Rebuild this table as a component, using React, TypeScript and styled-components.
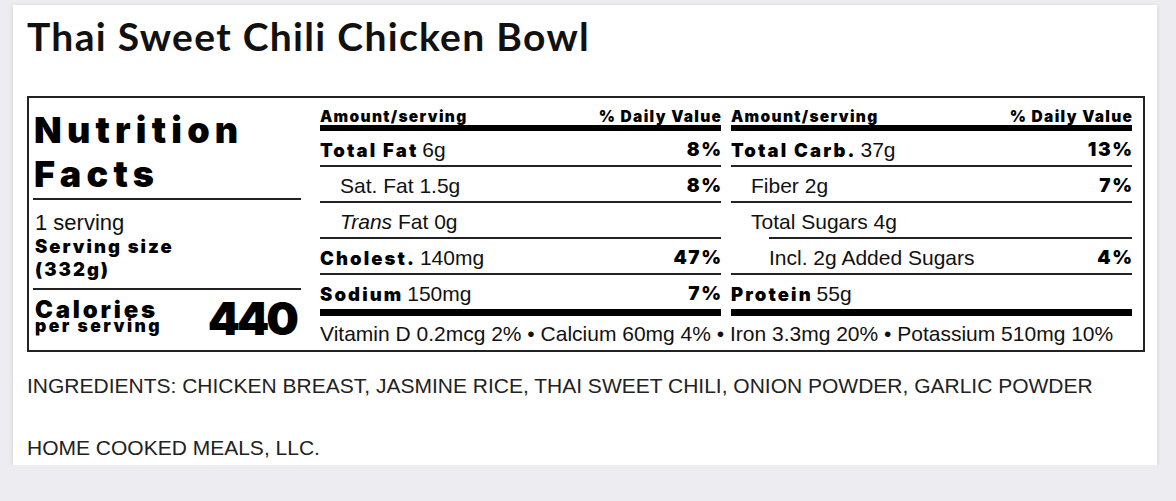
import React from "react";
import styled, { createGlobalStyle } from "styled-components";

const GlobalStyle = createGlobalStyle`
  html, body { margin: 0; padding: 0; background: #ededf1; }
  body { font-family: "Liberation Sans", Arial, sans-serif; color: #111; }
`;

const HEAVY = `"Inter", "Liberation Sans", Arial, sans-serif`;

const Page = styled.div`
  padding: 5px 19px 0 13px;
`;

const Card = styled.div`
  width: 1144px;
  height: 460px;
  box-sizing: border-box;
  background: #fff;
  box-shadow: 0 1px 4px rgba(0, 0, 0, 0.14);
  padding: 8px 0 0 14px;
`;

const Title = styled.h1`
  margin: 0;
  font-family: "Lato", sans-serif;
  font-weight: 700;
  font-size: 39px;
  line-height: 46px;
  letter-spacing: 1.3px;
  color: #111;
`;

const Label = styled.div`
  margin-top: 37px;
  width: 1118px;
  height: 256px;
  box-sizing: border-box;
  border: 2px solid #222;
  display: flex;
  padding: 0 11px 0 4px;
`;

const LeftPanel = styled.div`
  width: 268px;
  display: flex;
  flex-direction: column;
`;

const BigTitle = styled.div`
  font-family: ${HEAVY};
  font-weight: 900;
  font-size: 36px;
  line-height: 44px;
  letter-spacing: 5.2px;
  margin: 10px 0 2px;
  padding-left: 1px;
  color: #000;
`;

const ThinRule = styled.div`
  height: 2px;
  background: #222;
`;

const ServingBlock = styled.div`
  padding: 11px 0 7px 2px;
  display: flex;
  flex-direction: column;
`;

const Servings = styled.div`
  font-size: 22px;
  line-height: 24px;
  color: #111;
`;

const ServingSize = styled.div`
  font-family: ${HEAVY};
  font-weight: 900;
  font-size: 18.5px;
  line-height: 23px;
  letter-spacing: 2px;
  color: #000;
`;

const CaloriesRow = styled.div`
  display: flex;
  justify-content: space-between;
  align-items: flex-start;
  padding: 11px 0 0 2px;
  color: #000;
`;

const CaloriesLabel = styled.div`
  font-family: ${HEAVY};
  font-weight: 900;
  display: flex;
  flex-direction: column;
`;

const CalBig = styled.span`
  font-size: 24px;
  line-height: 18px;
  letter-spacing: 2.8px;
`;

const CalSmall = styled.span`
  font-size: 17.5px;
  line-height: 13px;
  letter-spacing: 2.4px;
`;

const CalValue = styled.div`
  font-family: ${HEAVY};
  font-weight: 900;
  font-size: 46px;
  line-height: 40px;
  letter-spacing: -3px;
  margin: -3px 5px 0 0;
`;

const RightArea = styled.div`
  margin-left: 19px;
  width: 812px;
  display: grid;
  grid-template-columns: 401px 401px;
  column-gap: 10px;
  grid-template-rows: auto 1fr;
`;

const Column = styled.div`
  display: flex;
  flex-direction: column;
`;

const Header = styled.div`
  height: 27px;
  display: flex;
  justify-content: space-between;
  align-items: flex-end;
  font-family: ${HEAVY};
  font-weight: 900;
  font-size: 15.5px;
  line-height: 16px;
  letter-spacing: 1.3px;
  margin-right: -1.3px;
  color: #000;
`;

const Bar = styled.div<{ $h: number }>`
  height: ${(p) => p.$h}px;
  background: #000;
`;

const Row = styled.div<{ $indent?: number }>`
  height: 34px;
  display: flex;
  justify-content: space-between;
  align-items: center;
  padding: 3px 0 0 ${(p) => p.$indent ?? 0}px;
  box-sizing: border-box;
  font-size: 21px;
  color: #111;
`;

const Rule = styled.div<{ $indent?: number }>`
  height: 2px;
  background: #222;
  margin-left: ${(p) => p.$indent ?? 0}px;
`;

const Strong = styled.b`
  font-family: ${HEAVY};
  font-weight: 900;
  font-size: 18.5px;
  letter-spacing: 2.1px;
  color: #000;
  margin-right: -2px;
`;

const Pct = styled.span`
  font-family: ${HEAVY};
  font-weight: 900;
  font-size: 19px;
  letter-spacing: 1.5px;
  margin-right: -1.5px;
  color: #000;
`;

const Vitamins = styled.div`
  grid-column: 1 / span 2;
  font-size: 21px;
  display: flex;
  align-items: center;
  padding-top: 2px;
  color: #111;
`;

const Ingredients = styled.p`
  margin: 22px 0 0;
  font-size: 21px;
  line-height: 24px;
  color: #222;
`;

const Company = styled.p`
  margin: 38px 0 0;
  font-size: 21px;
  line-height: 24px;
  color: #222;
`;

type Item = {
  label: string;
  bold?: boolean;
  italic?: string;
  amount: string;
  pct?: string;
  indent?: number;
  ruleIndent?: number;
};

const left: Item[] = [
  { label: "Total Fat", bold: true, amount: "6g", pct: "8%" },
  { label: "Sat. Fat", amount: "1.5g", pct: "8%", indent: 20 },
  { label: "Fat", italic: "Trans", amount: "0g", indent: 20 },
  { label: "Cholest.", bold: true, amount: "140mg", pct: "47%" },
  { label: "Sodium", bold: true, amount: "150mg", pct: "7%" },
];

const right: Item[] = [
  { label: "Total Carb.", bold: true, amount: "37g", pct: "13%" },
  { label: "Fiber", amount: "2g", pct: "7%", indent: 20 },
  { label: "Total Sugars", amount: "4g", indent: 20, ruleIndent: 38 },
  { label: "Incl. 2g Added Sugars", amount: "", pct: "4%", indent: 38 },
  { label: "Protein", bold: true, amount: "55g" },
];

const NutrientColumn: React.FC<{ items: Item[] }> = ({ items }) => (
  <Column>
    <Header>
      <span>Amount/serving</span>
      <span>% Daily Value</span>
    </Header>
    <Bar $h={6} />
    {items.map((it, i) => (
      <React.Fragment key={it.label}>
        <Row $indent={it.indent}>
          <span>
            {it.bold ? (
              <>
                <Strong>{it.label}</Strong>{" "}
              </>
            ) : it.italic ? (
              <>
                <i>{it.italic}</i> {it.label}{" "}
              </>
            ) : (
              <>{it.label} </>
            )}
            {it.amount}
          </span>
          {it.pct && <Pct>{it.pct}</Pct>}
        </Row>
        {i < items.length - 1 && <Rule $indent={it.ruleIndent} />}
      </React.Fragment>
    ))}
    <Bar $h={7} />
  </Column>
);

export default function App() {
  return (
    <>
      <GlobalStyle />
      <Page>
        <Card>
          <Title>Thai Sweet Chili Chicken Bowl</Title>
          <Label>
            <LeftPanel>
              <BigTitle>
                Nutrition
                <br />
                Facts
              </BigTitle>
              <ThinRule />
              <ServingBlock>
                <Servings>1 serving</Servings>
                <ServingSize>
                  Serving size
                  <br />
                  (332g)
                </ServingSize>
              </ServingBlock>
              <ThinRule />
              <CaloriesRow>
                <CaloriesLabel>
                  <CalBig>Calories</CalBig>
                  <CalSmall>per serving</CalSmall>
                </CaloriesLabel>
                <CalValue>440</CalValue>
              </CaloriesRow>
            </LeftPanel>
            <RightArea>
              <NutrientColumn items={left} />
              <NutrientColumn items={right} />
              <Vitamins>
                Vitamin D 0.2mcg 2% • Calcium 60mg 4% • Iron 3.3mg 20% • Potassium 510mg 10%
              </Vitamins>
            </RightArea>
          </Label>
          <Ingredients>
            INGREDIENTS: CHICKEN BREAST, JASMINE RICE, THAI SWEET CHILI, ONION POWDER, GARLIC POWDER
          </Ingredients>
          <Company>HOME COOKED MEALS, LLC.</Company>
        </Card>
      </Page>
    </>
  );
}
